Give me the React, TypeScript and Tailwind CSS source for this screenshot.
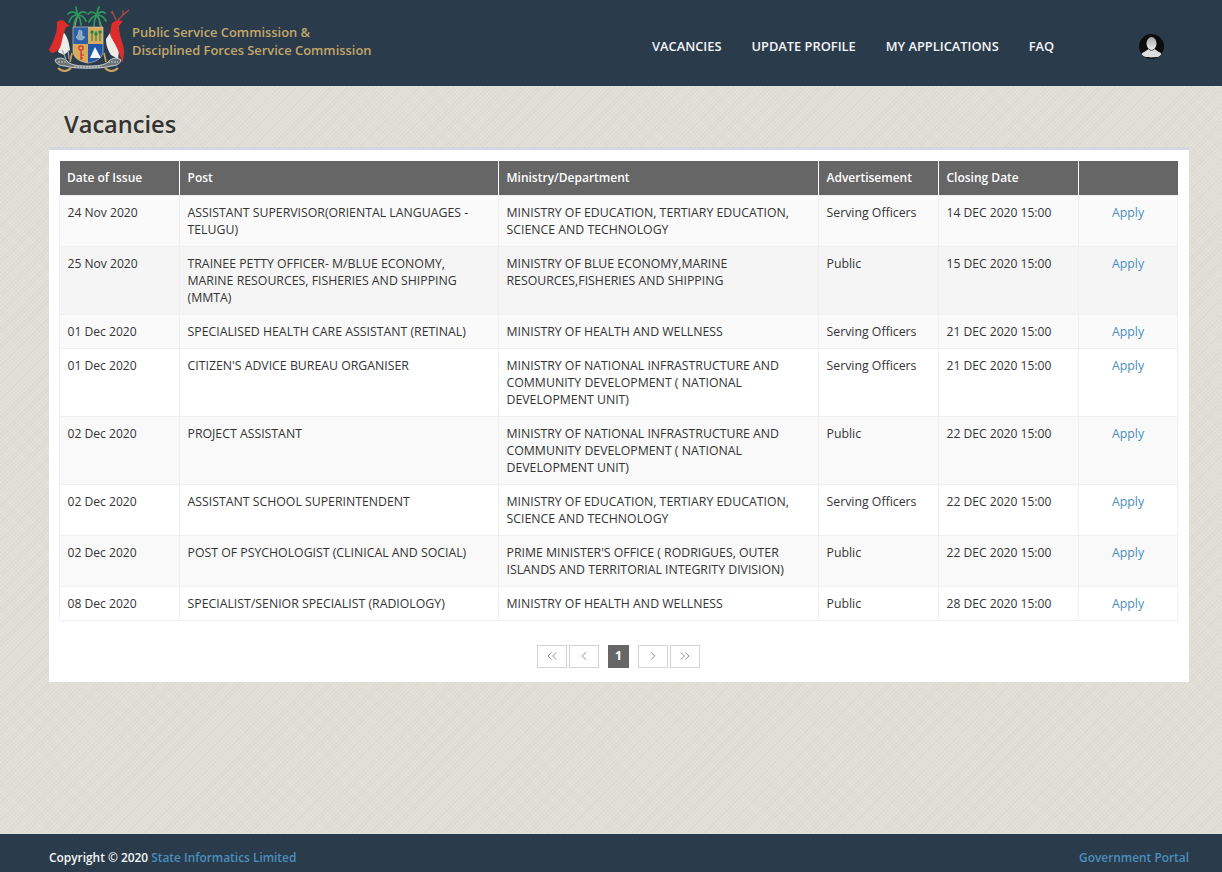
import { ChevronLeft, ChevronRight, ChevronsLeft, ChevronsRight } from "lucide-react";

const ROWS = [
  ["24 Nov 2020", "ASSISTANT SUPERVISOR(ORIENTAL LANGUAGES - TELUGU)", "MINISTRY OF EDUCATION, TERTIARY EDUCATION, SCIENCE AND TECHNOLOGY", "Serving Officers", "14 DEC 2020 15:00"],
  ["25 Nov 2020", "TRAINEE PETTY OFFICER- M/BLUE ECONOMY, MARINE RESOURCES, FISHERIES AND SHIPPING (MMTA)", "MINISTRY OF BLUE ECONOMY,MARINE RESOURCES,FISHERIES AND SHIPPING", "Public", "15 DEC 2020 15:00"],
  ["01 Dec 2020", "SPECIALISED HEALTH CARE ASSISTANT (RETINAL)", "MINISTRY OF HEALTH AND WELLNESS", "Serving Officers", "21 DEC 2020 15:00"],
  ["01 Dec 2020", "CITIZEN'S ADVICE BUREAU ORGANISER", "MINISTRY OF NATIONAL INFRASTRUCTURE AND COMMUNITY DEVELOPMENT ( NATIONAL DEVELOPMENT UNIT)", "Serving Officers", "21 DEC 2020 15:00"],
  ["02 Dec 2020", "PROJECT ASSISTANT", "MINISTRY OF NATIONAL INFRASTRUCTURE AND COMMUNITY DEVELOPMENT ( NATIONAL DEVELOPMENT UNIT)", "Public", "22 DEC 2020 15:00"],
  ["02 Dec 2020", "ASSISTANT SCHOOL SUPERINTENDENT", "MINISTRY OF EDUCATION, TERTIARY EDUCATION, SCIENCE AND TECHNOLOGY", "Serving Officers", "22 DEC 2020 15:00"],
  ["02 Dec 2020", "POST OF PSYCHOLOGIST (CLINICAL AND SOCIAL)", "PRIME MINISTER'S OFFICE ( RODRIGUES, OUTER ISLANDS AND TERRITORIAL INTEGRITY DIVISION)", "Public", "22 DEC 2020 15:00"],
  ["08 Dec 2020", "SPECIALIST/SENIOR SPECIALIST (RADIOLOGY)", "MINISTRY OF HEALTH AND WELLNESS", "Public", "28 DEC 2020 15:00"],
];

const HEADERS = ["Date of Issue", "Post", "Ministry/Department", "Advertisement", "Closing Date", ""];

// row 2 sits a shade darker than the other stripes in the picture
const ROW_BG = ["bg-[#fafafa]", "bg-[#f5f5f5]", "bg-[#fafafa]", "bg-white", "bg-[#f9f9f9]", "bg-white", "bg-[#f9f9f9]", "bg-white"];

function Crest() {
  return (
    <svg width="82" height="66" viewBox="0 0 82 66" className="shrink-0">
      {/* palm trunks */}
      <path d="M27 27 C26 20 28 14 30 9 M53 27 C54 20 52 14 49 9" stroke="#9aa07c" strokeWidth="1.3" fill="none" />
      {/* palm fronds */}
      <g fill="none" stroke="#2f9a5f" strokeWidth="1.7" strokeLinecap="round">
        <path d="M30 9 C26 5 23 5 20 8" />
        <path d="M30 9 C25 9 23 11 21 16" />
        <path d="M30 9 C28 12 26 16 26 20" />
        <path d="M30 9 C32 12 33 15 33 19" />
        <path d="M30 9 C33 9 36 11 38 15" />
        <path d="M30 9 C32 6 35 5 38 7" />
        <path d="M30 9 C29 6 28 3 28 1" />
        <path d="M49 9 C46 6 43 5 40 8" />
        <path d="M49 9 C45 10 43 12 41 16" />
        <path d="M49 9 C47 12 46 16 46 20" />
        <path d="M49 9 C51 12 52 15 52 19" />
        <path d="M49 9 C52 9 56 11 58 15" />
        <path d="M49 9 C51 6 54 5 57 7" />
        <path d="M49 9 C49 6 50 3 51 1" />
      </g>
      {/* dodo */}
      <path d="M15 26 C19 29 21 36 22 44 L16 49 L10 46 C12 40 13 32 15 26 Z" fill="#ecebe6" />
      <path d="M9 16 C12 13 17 14 18 17 L22 20 L18 21 C17 24 16 27 15 30 C14 35 13 39 12 42 C9 45 6 47 3 47 L1 44 C3 39 6 34 7 30 C9 26 9 21 9 16 Z" fill="#dc2c2c" />
      <path d="M14 44 C16 47 16 49 18 53 M20 44 L21 53" stroke="#a3a6a7" strokeWidth="1.2" fill="none" />
      {/* deer */}
      <path d="M62 27 C64 32 68 38 71 45 L70 53 L63 49 C60 44 58 40 58 33 Z" fill="#ecebe6" />
      <path d="M64 17 L69 14 L75 15 L71 20 C71 26 73 33 75 39 C77 45 76 52 74 57 C73 50 70 44 67 38 C64 33 62 30 62 27 C63 23 63 20 64 17 Z" fill="#dc2c2c" />
      <path d="M68 14 L64 5 M66 9 L63 6 M70 14 L75 9 L81 4 M75 9 L75 4" stroke="#b04a3e" strokeWidth="1.3" fill="none" />
      {/* shield */}
      <path d="M25 21 H40 V38 H25 Z" fill="#2b5fa6" />
      <path d="M40 21 H55 V38 H40 Z" fill="#d8ab5c" />
      <path d="M25 38 H40 V57 C33 56 26 53 25 46 Z" fill="#d8ab5c" />
      <path d="M40 38 H55 V46 C54 53 47 56 40 57 Z" fill="#1f57ad" />
      <path d="M28 31 C30 35 35 35 37 31 L34 30 V25 L31 24 L30 29 Z" fill="#8fa8bf" stroke="#c7d3df" strokeWidth="0.5" />
      <path d="M44 25 V35 M48 25 V35 M52 25 V35" stroke="#23854a" strokeWidth="1.1" />
      <circle cx="44" cy="26" r="1.7" fill="#23854a" />
      <circle cx="48" cy="28" r="1.7" fill="#23854a" />
      <circle cx="52" cy="26" r="1.7" fill="#23854a" />
      <circle cx="33" cy="42" r="2.2" fill="none" stroke="#cf2f2f" strokeWidth="1.2" />
      <path d="M33 44 V54 M33 49 H36 M33 52 H35" stroke="#cf2f2f" strokeWidth="1.2" />
      <path d="M47 41 L53 52 H42 Z" fill="#f4f5f7" />
      <path d="M25 21 H55 V46 C54 53 47 56 40 57 C33 56 26 53 25 46 Z" fill="none" stroke="#c7c2ae" strokeWidth="0.7" />
      {/* motto scroll */}
      <path d="M7 54 C12 50 18 53 21 57 C27 60 34 60 40 60 C46 60 53 60 59 57 C62 53 68 50 73 54 C72 58 68 60 63 60 C55 63 25 63 17 60 C12 60 8 58 7 54 Z" fill="#6d7478" stroke="#d7dbdb" strokeWidth="0.9" />
      <path d="M10 56 H20 M60 56 H70 M26 61 H54" stroke="#d7dbdb" strokeWidth="0.8" strokeDasharray="2 1" />
      <path d="M10 62 C14 66 19 66 23 62 M57 62 C61 66 66 66 70 62" fill="none" stroke="#c8a45f" strokeWidth="2.2" />
      <path d="M24 47 L22 56 M56 47 L58 56" stroke="#c8a45f" strokeWidth="1.6" />
    </svg>
  );
}

function Avatar() {
  return (
    <svg width="25" height="25" viewBox="0 0 25 25">
      <defs>
        <clipPath id="avatar-clip">
          <circle cx="12.5" cy="12.5" r="12.5" />
        </clipPath>
        <linearGradient id="avatar-skin" x1="0" y1="0" x2="0" y2="1">
          <stop offset="0" stopColor="#a9a9a9" />
          <stop offset="1" stopColor="#ececec" />
        </linearGradient>
      </defs>
      <circle cx="12.5" cy="12.5" r="12.5" fill="#0d0d0e" />
      <g clipPath="url(#avatar-clip)">
        <ellipse cx="12.5" cy="9.5" rx="5" ry="6.4" fill="url(#avatar-skin)" />
        <path d="M1.5 21.5 C3 18 7 17.5 9.5 15 C11 17 14 17 15.5 15 C18 17.5 22 18 23.5 21.5 C20 24 5 24 1.5 21.5 Z" fill="#dedede" />
      </g>
    </svg>
  );
}

function PageButton({ children }: { children: React.ReactNode }) {
  return (
    <span className="flex h-[23px] w-[30px] items-center justify-center border border-[#d4d4d4] bg-white text-[#777]">
      {children}
    </span>
  );
}

export default function App() {
  return (
    <div className="flex min-h-[872px] flex-col bg-[#e2dfd7] bg-[repeating-linear-gradient(45deg,#ffffff12_0_1px,transparent_1px_3px),repeating-linear-gradient(-45deg,#00000007_0_1px,transparent_1px_3px)] font-['Open_Sans',sans-serif] text-[12.3px] text-[#333]">
      <header className="flex h-[86px] bg-[#2a3b4c] pl-[48px]">
        <div className="mt-[6px]">
          <Crest />
        </div>
        <div className="ml-[2px] mt-[23px] w-[240px] whitespace-nowrap text-[12.9px] font-semibold leading-[18px] text-[#c4a769]">
          <div>Public Service Commission &amp;</div>
          <div>Disciplined Forces Service Commission</div>
        </div>
        <nav className="ml-[280px] mt-[37px] flex gap-[30px] text-[12.85px] font-semibold leading-[18px] text-[#f4f5f6]">
          <span>VACANCIES</span>
          <span>UPDATE PROFILE</span>
          <span>MY APPLICATIONS</span>
          <span>FAQ</span>
        </nav>
        <div className="ml-[85px] mt-[34px] flex">
          <Avatar />
        </div>
      </header>

      <main className="flex-1 px-[49px]">
        <h1 className="h-[61px] pl-[15px] pt-[21px] text-[23.6px] font-semibold leading-[34px] text-[#333]">Vacancies</h1>
        <div className="h-[535px] w-[1140px] border-t-[3px] border-[#d3d8e3] bg-white pl-[10px] pt-[11px]">
          <table className="w-[1118px] table-fixed border-collapse">
            <colgroup>
              <col className="w-[120px]" />
              <col className="w-[319px]" />
              <col className="w-[320px]" />
              <col className="w-[120px]" />
              <col className="w-[140px]" />
              <col className="w-[99px]" />
            </colgroup>
            <thead>
              <tr className="h-[34px] bg-[#666] text-white">
                {HEADERS.map((h, i) => (
                  <th key={i} className="border-x border-b border-x-white border-b-[#f0f0f0] px-[7.5px] text-left text-[12px] font-semibold first:border-l-0 last:border-r-0">
                    {h}
                  </th>
                ))}
              </tr>
            </thead>
            <tbody>
              {ROWS.map((row, i) => (
                <tr key={i} className={ROW_BG[i]}>
                  {row.map((cell, j) => (
                    <td
                      key={j}
                      className={`border border-[#f0f0f0] px-[7.5px] py-[8px] align-top leading-[17px] ${j === 0 || j === 4 ? "text-[12.1px]" : ""}`}
                    >
                      {cell}
                    </td>
                  ))}
                  <td className="border border-[#f0f0f0] px-[7.5px] py-[8px] text-center align-top leading-[17px] text-[#4a8fbd]">
                    Apply
                  </td>
                </tr>
              ))}
            </tbody>
          </table>
          <div className="mt-[24px] flex w-[1119px] items-center justify-center">
            <div className="flex items-center gap-[2px]">
              <PageButton><ChevronsLeft size={16} strokeWidth={1.2} /></PageButton>
              <PageButton><ChevronLeft size={14} strokeWidth={1.4} /></PageButton>
            </div>
            <span className="mx-[9px] flex h-[23px] w-[21px] items-center justify-center bg-[#666] font-bold text-white">1</span>
            <div className="flex items-center gap-[2px]">
              <PageButton><ChevronRight size={14} strokeWidth={1.4} /></PageButton>
              <PageButton><ChevronsRight size={16} strokeWidth={1.2} /></PageButton>
            </div>
          </div>
        </div>
      </main>

      <footer className="flex h-[38px] justify-between bg-[#2a3b4c] pl-[49px] pr-[33px] pt-[15px] text-[11.9px] font-semibold leading-[17px]">
        <div className="text-[#f4f5f6]">
          Copyright © 2020 <span className="text-[#4a8fbd]">State Informatics Limited</span>
        </div>
        <div className="text-[#4a8fbd]">Government Portal</div>
      </footer>
    </div>
  );
}
